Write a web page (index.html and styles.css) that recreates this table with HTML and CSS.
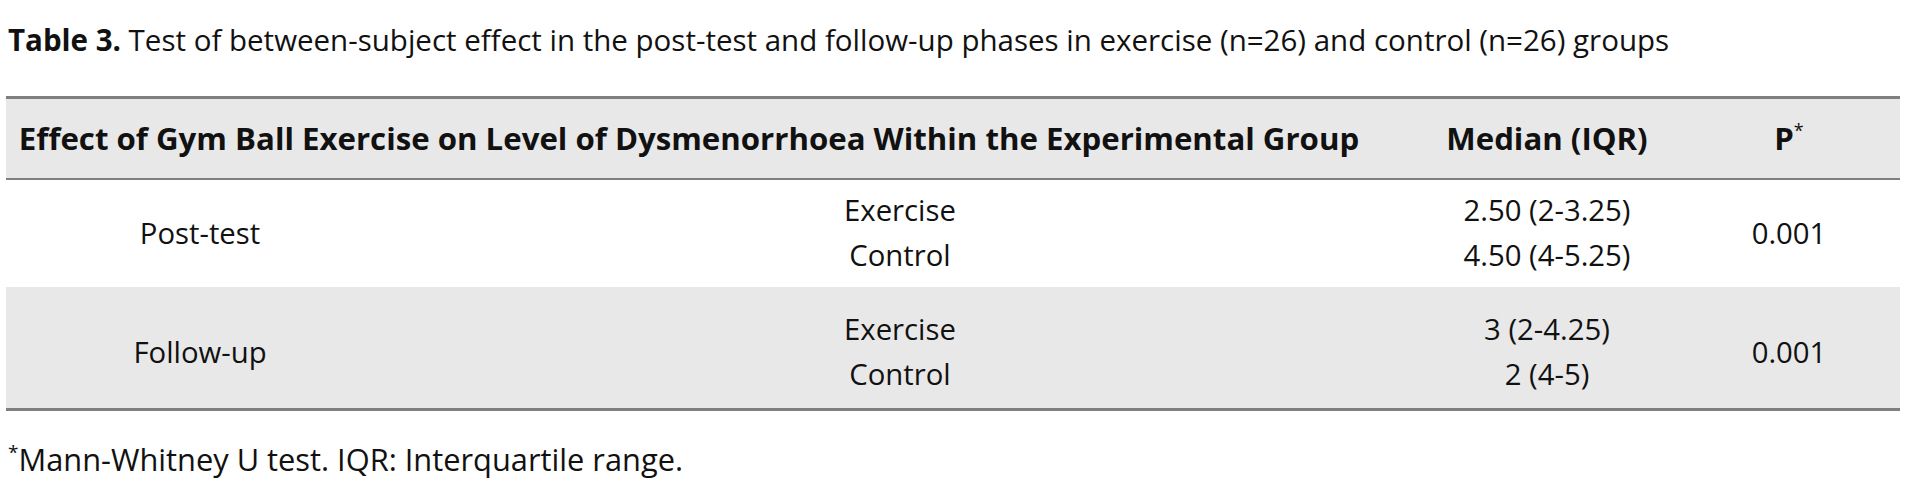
FILE: index.html
```html
<!DOCTYPE html>
<html lang="en">
<head>
<meta charset="utf-8">
<title>Table 3</title>
<link rel="stylesheet" href="styles.css">
</head>
<body>
<p class="caption"><b>Table 3.</b> Test of between-subject effect in the post-test and follow-up phases in exercise (n=26) and control (n=26) groups</p>
<table class="data">
  <colgroup>
    <col class="c-phase">
    <col class="c-group">
    <col class="c-median">
    <col class="c-p">
  </colgroup>
  <thead>
    <tr>
      <th colspan="2" class="h-effect">Effect of Gym Ball Exercise on Level of Dysmenorrhoea Within the Experimental Group</th>
      <th class="h-median">Median (IQR)</th>
      <th class="h-p">P<sup>*</sup></th>
    </tr>
  </thead>
  <tbody>
    <tr class="row-post">
      <td>Post-test</td>
      <td>Exercise<br>Control</td>
      <td>2.50 (2-3.25)<br>4.50 (4-5.25)</td>
      <td class="p-val">0.001</td>
    </tr>
    <tr class="row-follow">
      <td>Follow-up</td>
      <td>Exercise<br>Control</td>
      <td>3 (2-4.25)<br>2 (4-5)</td>
      <td class="p-val">0.001</td>
    </tr>
  </tbody>
</table>
<p class="footnote"><sup>*</sup>Mann-Whitney U test. IQR: Interquartile range.</p>
</body>
</html>
```

FILE: styles.css
```css
html, body {
  margin: 0;
  padding: 0;
  background: #ffffff;
}
body {
  padding: 0 7px 0 6px;
  font-family: "Open Sans", "Liberation Sans", sans-serif;
  font-size: 29.3px;
  color: #111111;
}
.caption {
  margin: 0;
  padding: 20px 0 0 2px;
  line-height: 40px;
  font-size: 29.5px;
}
.caption b {
  font-weight: 700;
}
.data {
  margin-top: 36px;
  width: 1894px;
  border-collapse: collapse;
  table-layout: fixed;
  border-top: 3px solid #7f7f7f;
  border-bottom: 3px solid #7f7f7f;
}
.c-phase { width: 388px; }
.c-group { width: 1012px; }
.c-median { width: 282px; }
.c-p { width: 212px; }
.data th,
.data td {
  text-align: center;
  vertical-align: middle;
  padding: 0;
  line-height: 45px;
  font-weight: 400;
}
.data thead tr {
  background: #e8e8e8;
  border-bottom: 2px solid #7f7f7f;
}
.data th {
  font-weight: 700;
  font-size: 31.2px;
  padding: 17px 0;
}
.data th.h-effect {
  padding-right: 34px;
}
.data th.h-p,
.data td.p-val {
  padding-right: 10px;
}
.data sup {
  font-size: 18px;
  line-height: 0;
  vertical-align: 13px;
  font-weight: 400;
}
.row-post td {
  padding-top: 8px;
  padding-bottom: 9px;
}
.row-follow {
  background: #e8e8e8;
}
.row-follow td {
  padding-top: 20px;
  padding-bottom: 11px;
}
.footnote {
  margin: 0;
  padding: 28px 0 0 2px;
  line-height: 40px;
  font-size: 30.8px;
}
.footnote sup {
  font-size: 19px;
  line-height: 0;
  vertical-align: 12px;
}
```
